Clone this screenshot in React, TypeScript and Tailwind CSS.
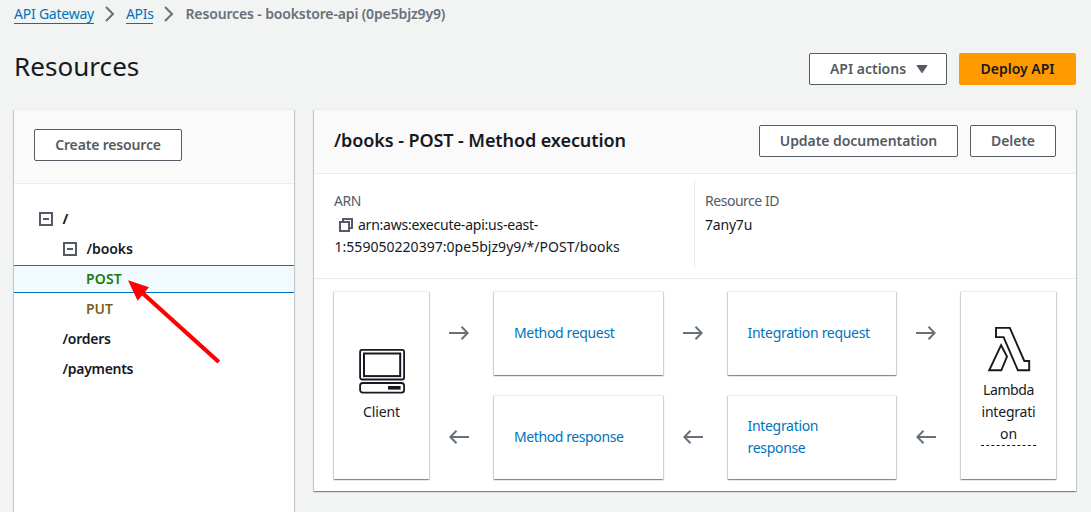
import type { ReactNode } from 'react';

const panelShadow =
  'shadow-[0_1px_1px_0_rgba(0,28,36,0.3),1px_1px_1px_0_rgba(0,28,36,0.15),-1px_1px_1px_0_rgba(0,28,36,0.15)] border-t border-[#eaeded] bg-white';

function Button({ children, className = '' }: { children: ReactNode; className?: string }) {
  return (
    <button
      className={`flex h-8 shrink-0 items-center justify-center rounded-xs border border-[#545b64] bg-white font-semibold text-[#545b64] ${className}`}
    >
      {children}
    </button>
  );
}

function Chevron() {
  return (
    <svg width="10" height="16" viewBox="0 0 10 16" className="shrink-0" fill="none" stroke="#687078" strokeWidth="2">
      <path d="M1 1 L8 8 L1 15" />
    </svg>
  );
}

function Collapse() {
  return (
    <svg width="14" height="14" viewBox="0 0 14 14" className="shrink-0" fill="none" stroke="#545b64" strokeWidth="2">
      <path d="M1 1 H13 V13 H1 Z M4 7 H10" />
    </svg>
  );
}

function Arrow({ left = false }: { left?: boolean }) {
  return (
    <div className="flex h-[84px] items-center">
      <svg
        width="20"
        height="14"
        viewBox="0 0 20 14"
        fill="none"
        stroke="#687078"
        strokeWidth="2"
        className={left ? '-scale-x-100' : ''}
      >
        <path d="M0 7 H18.6 M12.5 0.8 L18.7 7 L12.5 13.2" />
      </svg>
    </div>
  );
}

function Arrows() {
  return (
    <div className="flex w-[65px] shrink-0 flex-col gap-5 pl-5">
      <Arrow />
      <Arrow left />
    </div>
  );
}

function Step({ children, className }: { children: ReactNode; className: string }) {
  return (
    <a className={`flex h-[84px] items-center pb-px pl-5 text-[#0073bb] ${panelShadow}`}>
      <span className={className}>{children}</span>
    </a>
  );
}

function ComputerIcon() {
  return (
    <svg width="45" height="45" viewBox="0 0 45 45" fill="none" stroke="#16191f" strokeWidth="1.8" className="overflow-visible">
      <rect x="1.1" y="0.9" width="44" height="29.6" rx="2" />
      <rect x="5" y="4.5" width="36.2" height="22.6" strokeWidth="2" />
      <rect x="1.1" y="34" width="44" height="9.6" rx="2.6" />
      <path d="M29 38.8 H41.6" strokeWidth="3.6" />
    </svg>
  );
}

function LambdaIcon() {
  return (
    <svg width="43" height="46" viewBox="0 0 43 46" fill="none" stroke="#16191f" strokeWidth="1.9" className="overflow-visible">
      <path d="M9 1.9 H22.8 L37.3 35 H42.2 V44.3 H30.9 L16.6 11.1 H9 Z" />
      <path d="M14.1 19.2 L20 30.5 L14.3 44.3 H2.2 Z" />
    </svg>
  );
}

export default function App() {
  return (
    <div className="relative h-[512px] w-[1091px] overflow-hidden bg-[#f2f3f3] pl-3.5 pr-[15px] font-['Noto_Sans','Open_Sans',sans-serif] text-[14px] leading-[22px] text-[#16191f]">
      <nav className="flex h-[28px] items-start pt-[3px]">
        <a className="h-[21px] w-20 whitespace-nowrap border-b border-[#0073bb] tracking-[-0.23px] text-[#0073bb]">API Gateway</a>
        <div className="flex h-[22px] w-8 items-center pl-[11px]"><Chevron /></div>
        <a className="h-[21px] w-[27px] whitespace-nowrap border-b border-[#0073bb] tracking-[-0.34px] text-[#0073bb]">APIs</a>
        <div className="flex h-[22px] w-[32.5px] items-center pl-[11px]"><Chevron /></div>
        <span className="whitespace-nowrap font-semibold tracking-[-0.14px] text-[#687078]">Resources - bookstore-api (0pe5bjz9y9)</span>
      </nav>

      <header className="flex h-[81px] items-start justify-between pt-[25px]">
        <h1 className="-mt-[5px] text-[26px] leading-9 tracking-[0.05px]">Resources</h1>
        <div className="flex gap-3">
          <Button className="w-[138px] gap-[10px] pl-0.5">
            <span>API actions</span>
            <svg width="12" height="8" viewBox="0 0 12 8"><path d="M1 0.5 H11 L6 7.8 Z" fill="#545b64" stroke="#545b64" strokeLinejoin="round" /></svg>
          </Button>
          <button className="h-8 w-[117px] rounded-xs bg-[#ff9900] font-semibold">Deploy API</button>
        </div>
      </header>

      <main className="flex items-start gap-5">
        <aside className={`h-[420px] w-[280px] shrink-0 ${panelShadow}`}>
          <div className="h-[74px] border-b border-[#eaeded] bg-[#fafafa] pl-5 pt-[19px]">
            <Button className="w-[148px] tracking-[-0.17px]">Create resource</Button>
          </div>
          <ul className="pt-5 font-bold">
            <li className="flex h-[30px] items-center gap-[9.5px] pl-[25px]"><Collapse /><span>/</span></li>
            <li className="flex h-[30px] items-center gap-[9.5px] pl-[49px]"><Collapse /><span className="font-semibold tracking-[-0.08px]">/books</span></li>
            <li className="my-px flex h-7 items-center border-y border-[#0073bb] bg-[#f1faff] pl-[72px] font-semibold tracking-[0.18px] text-[#1d7a0c]">POST</li>
            <li className="flex h-[30px] items-center pl-[72px] font-semibold text-[#7d5f1a]">PUT</li>
            <li className="flex h-[30px] items-center pl-[48.5px] font-semibold tracking-[-0.26px]">/orders</li>
            <li className="flex h-[30px] items-center pl-[48.5px] font-semibold tracking-[-0.3px]">/payments</li>
          </ul>
        </aside>

        <section className={`h-[382px] w-[762px] shrink-0 ${panelShadow}`}>
          <div className="flex h-16 items-start border-b border-[#eaeded] bg-[#fafafa] px-5 pt-[15px]">
            <h2 className="mt-1 flex-1 whitespace-nowrap text-[18px] font-semibold leading-[22px] tracking-[-0.09px]">/books - POST - Method execution</h2>
            <Button className="w-[199px] tracking-[-0.06px]">Update documentation</Button>
            <Button className="ml-3 w-[86px] tracking-[-0.08px]">Delete</Button>
          </div>

          <div className="flex h-[105px] border-b border-[#eaeded] pt-1.5">
            <div className="h-[88px] w-[381px] border-r border-[#eaeded] pl-5 pt-[10px]">
              <div className="tracking-[-0.4px] text-[#545b64]">ARN</div>
              <div className="mt-0.5 whitespace-nowrap">
                <div className="flex items-center pl-[5px] tracking-[-0.23px]">
                  <svg width="14" height="14" viewBox="0 0 14 14" className="mr-[5px]" fill="none" stroke="#545b64" strokeWidth="2">
                    <path d="M1 4 H10 V13 H1 Z M4 4 V1 H13 V10 H10" />
                  </svg>
                  arn:aws:execute-api:us-east-
                </div>
                <div className="pl-[0.5px] tracking-[0.03px]">1:559050220397:0pe5bjz9y9/*/POST/books</div>
              </div>
            </div>
            <div className="pl-[10px] pt-[10px]">
              <div className="tracking-[-0.47px] text-[#545b64]">Resource ID</div>
              <div className="mt-0.5 tracking-[-0.2px]">7any7u</div>
            </div>
          </div>

          <div className="flex px-5 pt-3">
            <div className={`flex h-[188px] w-[95px] shrink-0 flex-col items-center pt-[57px] ${panelShadow}`}>
              <ComputerIcon />
              <span className="mt-[7px] tracking-[-0.11px]">Client</span>
            </div>
            <Arrows />
            <div className="flex w-[169px] shrink-0 flex-col gap-5">
              <Step className="whitespace-nowrap tracking-[-0.35px]">Method request</Step>
              <Step className="whitespace-nowrap tracking-[-0.4px]">Method response</Step>
            </div>
            <Arrows />
            <div className="flex w-[168px] shrink-0 flex-col gap-5">
              <Step className="-ml-[0.5px] whitespace-nowrap tracking-[-0.3px]">Integration request</Step>
              <Step className="-ml-[0.5px] tracking-[-0.31px]">Integration<br />response</Step>
            </div>
            <Arrows />
            <div className={`flex h-[188px] w-[95px] shrink-0 flex-col items-center pt-[34px] ${panelShadow}`}>
              <LambdaIcon />
              <div className="mt-[7px] w-[55px] border-b border-dashed border-[#16191f] text-center">
                <span className="tracking-[-0.38px]">Lambda</span><br />
                <span className="tracking-[-0.21px]">integrati</span><br />
                <span>on</span>
              </div>
            </div>
          </div>
        </section>
      </main>

      <svg className="pointer-events-none absolute left-[120px] top-[270px]" width="110" height="100" viewBox="120 270 110 100">
        <path d="M143 293.5 L218.8 362" stroke="#ff0000" strokeWidth="4.2" />
        <path d="M128 280.3 L149 287.2 L137.6 300.8 Z" fill="#ff0000" />
      </svg>
    </div>
  );
}
